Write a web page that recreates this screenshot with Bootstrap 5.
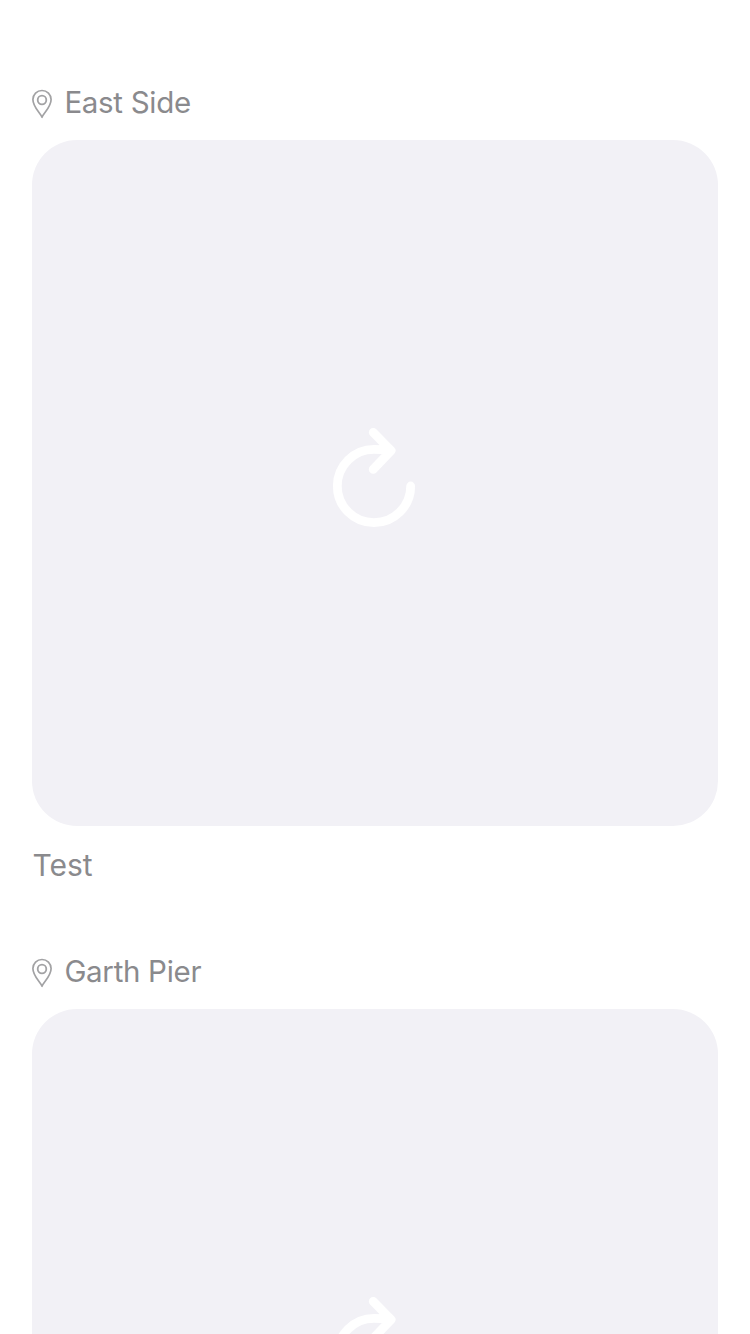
<!DOCTYPE html>
<html lang="en">
<head>
<meta charset="utf-8">
<meta name="viewport" content="width=device-width, initial-scale=1">
<title>Places</title>
<link href="https://cdn.jsdelivr.net/npm/bootstrap@5.3.0/dist/css/bootstrap.min.css" rel="stylesheet">
<style>
  html, body { height: 100%; overflow: hidden; }
  body { font-family: Inter, "Liberation Sans", sans-serif; color: #8a8a8d; background: #fff; }
  .feed { height: 1334px; padding: 80px 32px 0; }
  .place { height: 869px; }
  .place-name { height: 60px; padding-bottom: 12px; gap: 12.4px; font-size: 29.5px; line-height: 46px; letter-spacing: -.3px; }
  .place-name span { padding-bottom: 4px; }
  .photo { height: 686px; border-radius: 45px; background: #f2f1f6; }
  .caption { padding: 16px 0 0 .5px; font-size: 30px; line-height: 46px; }
</style>
</head>
<body>
<svg class="d-none" aria-hidden="true">
  <symbol id="pin" viewBox="0 0 20 30">
    <path d="M10 28.3C8.6 24.2 .9 18.4 .9 10.6a9.1 9.1 0 0 1 18.2 0C19.1 18.4 11.4 24.2 10 28.3Z" fill="none" stroke="#a2a2a4" stroke-width="1.7" stroke-linejoin="round"/>
    <circle cx="10" cy="11" r="4.3" fill="none" stroke="#a2a2a4" stroke-width="1.8"/>
  </symbol>
  <symbol id="reload" viewBox="0 0 110 136">
    <path d="M90.7 71A36.7 36.7 0 1 1 54 34.3Q62 34.3 69 35.5M53.2 17.3 71.1 35.6 53.2 54.4" fill="none" stroke="#fff" stroke-width="8.8" stroke-linecap="round" stroke-linejoin="round"/>
  </symbol>
</svg>
<main class="feed overflow-hidden">
  <article class="place">
    <header class="place-name d-flex align-items-center">
      <svg width="20" height="30"><use href="#pin"/></svg>
      <span>East Side</span>
    </header>
    <div class="photo d-flex align-items-center justify-content-center">
      <svg width="110" height="136" role="img" aria-label="Reload"><use href="#reload"/></svg>
    </div>
    <p class="caption m-0">Test</p>
  </article>
  <article class="place">
    <header class="place-name d-flex align-items-center">
      <svg width="20" height="30"><use href="#pin"/></svg>
      <span>Garth Pier</span>
    </header>
    <div class="photo d-flex align-items-center justify-content-center">
      <svg width="110" height="136" role="img" aria-label="Reload"><use href="#reload"/></svg>
    </div>
  </article>
</main>
<script src="https://cdn.jsdelivr.net/npm/bootstrap@5.3.0/dist/js/bootstrap.bundle.min.js"></script>
</body>
</html>
